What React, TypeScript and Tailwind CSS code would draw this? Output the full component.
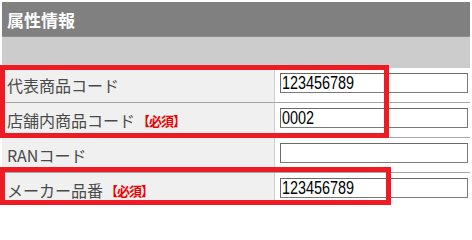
import React from "react";

const rows: { label: string; required?: boolean; value: string }[] = [
  { label: "代表商品コード", value: "123456789" },
  { label: "店舗内商品コード", required: true, value: "0002" },
  { label: "RANコード", value: "" },
  { label: "メーカー品番", required: true, value: "123456789" },
];

export default function App() {
  return (
    <div className="relative w-[472px] h-[205px] overflow-hidden bg-white font-['Noto_Sans_CJK_JP',sans-serif]">
      <div className="ml-[2px] mt-[2px] w-[468px]">
        <div className="h-[35px] bg-[#808080] flex items-center px-[5px] text-white font-bold text-[17px] leading-none border-b border-[#8e8e8e]">
          属性情報
        </div>
        <div className="h-[31px] bg-[#cccccc]" />
        {rows.map((r) => (
          <div key={r.label} className="flex h-[35px] border-b border-[#a6a6a6]">
            <div className="w-[273px] shrink-0 bg-[#f0f0f0] border-r border-[#cfcfcf] flex items-center pl-[5px] text-[16px] leading-none text-[#4a4a4a]">
              <span>{r.label}</span>
              {r.required && (
                <span className="ml-[2px] text-[13px] font-bold text-[#ee0000] tracking-[-1px]">【必須】</span>
              )}
            </div>
            <div className="flex-1 bg-white pl-[5px] pr-[2px] pt-[5px]">
              <div className="h-[20px] w-full border border-[#7a7a7a] border-t-[#6a6a6a] border-l-[#6a6a6a] bg-white flex items-center pl-[1px] overflow-hidden">
                <span className="inline-block origin-left scale-x-[0.8] font-['Liberation_Sans',sans-serif] text-[18px] leading-none text-black whitespace-nowrap">
                  {r.value}
                </span>
              </div>
            </div>
          </div>
        ))}
      </div>
      <div className="absolute left-0 top-[65px] w-[389px] h-[73px] border-[5px] border-[#ed1c24]" />
      <div className="absolute left-0 top-[167px] w-[391px] h-[38px] border-[5px] border-[#ed1c24]" />
    </div>
  );
}
